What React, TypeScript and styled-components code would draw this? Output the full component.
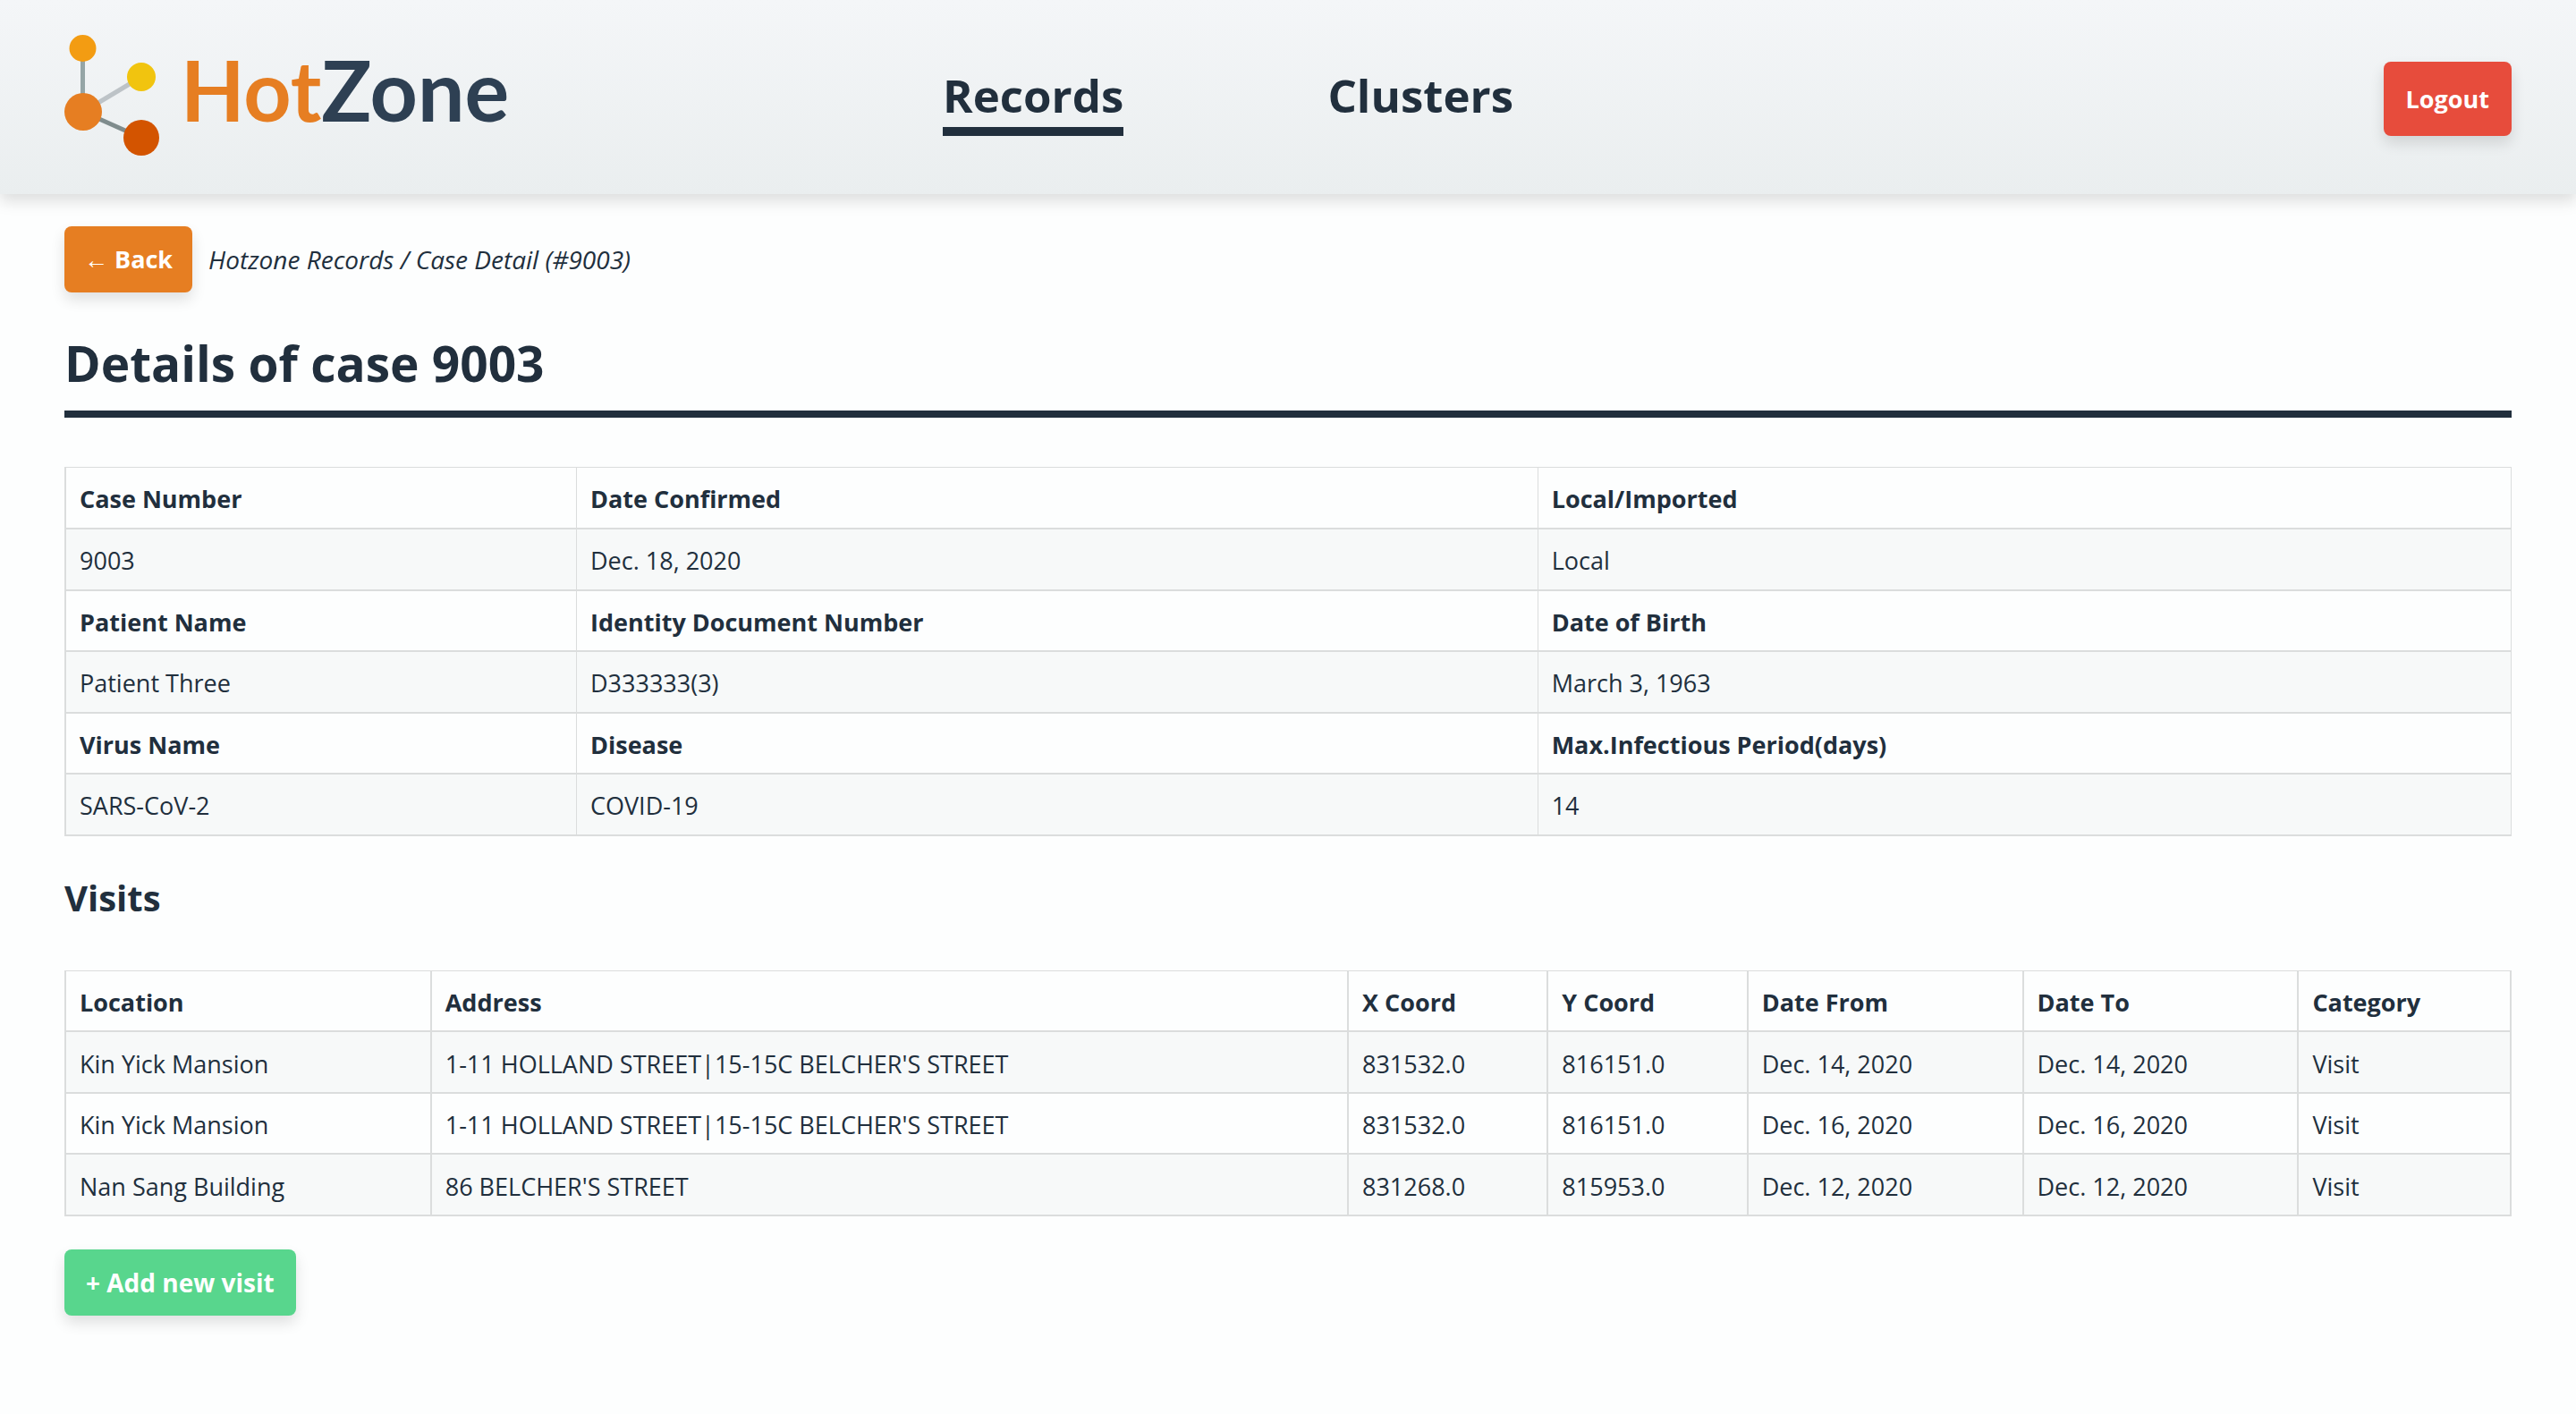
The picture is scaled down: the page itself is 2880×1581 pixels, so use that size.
import React from 'react';
import styled, { createGlobalStyle } from 'styled-components';

const ink = '#212f3d';
const line = '#dbdddd';
const sans = "'Open Sans', 'Noto Sans', sans-serif";

const GlobalStyle = createGlobalStyle`
  *, *::before, *::after { box-sizing: border-box; }
  body {
    margin: 0;
    background: #fdfefe;
    color: ${ink};
    font-family: ${sans};
    font-size: 27px;
    line-height: 40px;
  }
`;

const Header = styled.header`
  display: grid;
  grid-template-columns: minmax(0, 22fr) auto minmax(0, 25fr);
  align-items: center;
  padding: 36px 72px 32px;
  background: linear-gradient(#f4f6f8, #eaeeef);
  box-shadow: 0 8px 16px rgba(0, 0, 0, 0.13);
`;

const Brand = styled.a`
  display: flex;
  align-items: flex-start;
  gap: 22px;
  color: #2e4053;
  font-family: Lato, sans-serif;
  font-size: 93px;
  font-weight: 700;
  line-height: 129px;
  text-decoration: none;
`;

const BrandMark = styled.svg`
  flex: none;
  width: 108px;
  height: 149px;
`;

const BrandHot = styled.span`
  color: #e67e22;
`;

const Nav = styled.nav`
  display: flex;
  gap: 228px;
`;

const NavLink = styled.a<{ $active?: boolean }>`
  border-bottom: 10px solid ${(p) => (p.$active ? ink : 'transparent')};
  color: ${ink};
  font-size: 51px;
  font-weight: 700;
  line-height: 72px;
  text-decoration: none;
`;

const buttonSizes = {
  small: { padding: '17px 22px', font: '27px' },
  tall: { padding: '22px 25px 21px', font: '27px' },
  large: { padding: '17px 24px', font: '28px' },
};

const Button = styled.button<{ $color: string; $size: keyof typeof buttonSizes }>`
  padding: ${(p) => buttonSizes[p.$size].padding};
  border: 0;
  border-radius: 8px;
  background: ${(p) => p.$color};
  box-shadow: 0 8px 16px rgba(0, 0, 0, 0.12);
  color: #fff;
  font: 700 ${(p) => buttonSizes[p.$size].font}/40px ${sans};
  white-space: nowrap;
  cursor: pointer;
`;

const HeaderActions = styled.div`
  display: flex;
  justify-content: flex-end;
`;

const Main = styled.main`
  padding: 36px 72px;
`;

const Crumbs = styled.div`
  display: flex;
  align-items: center;
  gap: 18px;
  font-size: 28px;
  font-style: italic;
`;

const Title = styled.h1`
  margin: 39px 0 55px;
  padding-bottom: 13px;
  border-bottom: 8px solid ${ink};
  font-size: 55px;
  line-height: 80px;
`;

const Subtitle = styled.h2`
  margin: 36px 0 49px;
  font-size: 40px;
  line-height: 64px;
`;

const Table = styled.table<{ $rule: string }>`
  width: 100%;
  margin-bottom: 37px;
  border-collapse: collapse;
  table-layout: fixed;

  th, td {
    padding: 4px 15px 0;
    border: solid ${line};
    border-width: 1px ${(p) => p.$rule} 2px;
    text-align: left;
  }

  th:first-child, td:first-child {
    border-left-width: 2px;
  }
`;

const Row = styled.tr`
  height: 68px;
  &:nth-child(even) {
    height: 69px;
    background: #f7f9f9;
  }
`;

const Col = styled.col<{ $width: string }>`
  width: ${(p) => p.$width};
`;

const caseColumns = ['20.9%', '39.3%', '39.8%'];

const caseRows = [
  { head: true, cells: ['Case Number', 'Date Confirmed', 'Local/Imported'] },
  { head: false, cells: ['9003', 'Dec. 18, 2020', 'Local'] },
  { head: true, cells: ['Patient Name', 'Identity Document Number', 'Date of Birth'] },
  { head: false, cells: ['Patient Three', 'D333333(3)', 'March 3, 1963'] },
  { head: true, cells: ['Virus Name', 'Disease', 'Max.Infectious Period(days)'] },
  { head: false, cells: ['SARS-CoV-2', 'COVID-19', '14'] },
];

const visitColumns = ['14.95%', '37.5%', '8.17%', '8.17%', '11.26%', '11.26%', '8.69%'];

const visitRows = [
  { head: true, cells: ['Location', 'Address', 'X Coord', 'Y Coord', 'Date From', 'Date To', 'Category'] },
  {
    head: false,
    cells: ['Kin Yick Mansion', "1-11 HOLLAND STREET|15-15C BELCHER'S STREET", '831532.0', '816151.0', 'Dec. 14, 2020', 'Dec. 14, 2020', 'Visit'],
  },
  {
    head: false,
    cells: ['Kin Yick Mansion', "1-11 HOLLAND STREET|15-15C BELCHER'S STREET", '831532.0', '816151.0', 'Dec. 16, 2020', 'Dec. 16, 2020', 'Visit'],
  },
  {
    head: false,
    cells: ['Nan Sang Building', "86 BELCHER'S STREET", '831268.0', '815953.0', 'Dec. 12, 2020', 'Dec. 12, 2020', 'Visit'],
  },
];

interface DataTableProps {
  columns: string[];
  rows: { head: boolean; cells: string[] }[];
  rule: string;
}

function DataTable({ columns, rows, rule }: DataTableProps) {
  return (
    <Table $rule={rule}>
      <colgroup>
        {columns.map((width, i) => (
          <Col key={i} $width={width} />
        ))}
      </colgroup>
      <tbody>
        {rows.map((row, r) => (
          <Row key={r}>
            {row.cells.map((text, c) => (row.head ? <th key={c}>{text}</th> : <td key={c}>{text}</td>))}
          </Row>
        ))}
      </tbody>
    </Table>
  );
}

export default function App() {
  return (
    <>
      <GlobalStyle />
      <Header>
        <Brand href="#">
          <BrandMark viewBox="0 0 108 149" aria-hidden="true">
            <g strokeWidth="5" fill="none">
              <path d="M20.5 18V88" stroke="#95a5a6" />
              <path d="M21 89L86 50" stroke="#bdc3c7" />
              <path d="M21 89L86 118" stroke="#7f8c8d" />
            </g>
            <circle cx="20.5" cy="18" r="15" fill="#f39c12" />
            <circle cx="86" cy="50" r="16" fill="#f1c40f" />
            <circle cx="21" cy="89" r="21" fill="#e67e22" />
            <circle cx="86" cy="118" r="20" fill="#d35400" />
          </BrandMark>
          <span>
            <BrandHot>Hot</BrandHot>Zone
          </span>
        </Brand>
        <Nav>
          <NavLink href="#records" $active>
            Records
          </NavLink>
          <NavLink href="#clusters">Clusters</NavLink>
        </Nav>
        <HeaderActions>
          <Button $color="#e74c3c" $size="tall">
            Logout
          </Button>
        </HeaderActions>
      </Header>
      <Main>
        <Crumbs>
          <Button $color="#e67e22" $size="small">
            ← Back
          </Button>
          <span>Hotzone Records / Case Detail (#9003)</span>
        </Crumbs>
        <Title>Details of case 9003</Title>
        <DataTable columns={caseColumns} rows={caseRows} rule="1px" />
        <Subtitle>Visits</Subtitle>
        <DataTable columns={visitColumns} rows={visitRows} rule="2px" />
        <Button $color="#58d68d" $size="large">
          + Add new visit
        </Button>
      </Main>
    </>
  );
}
